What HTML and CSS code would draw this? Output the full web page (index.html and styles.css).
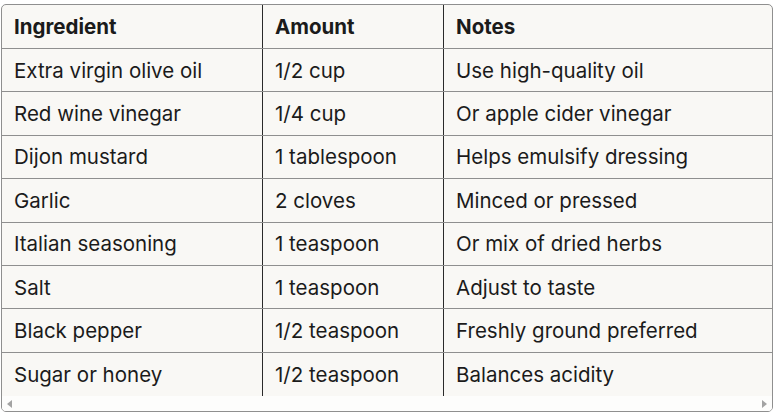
FILE: index.html
```html
<!DOCTYPE html>
<html lang="en">
<head>
<meta charset="utf-8">
<title>Vinaigrette ingredients</title>
<link rel="stylesheet" href="styles.css">
</head>
<body>
<div class="wrap">
  <div class="table" role="table">
    <div class="row head" role="row">
      <div class="cell c1" role="columnheader">Ingredient</div>
      <div class="cell c2" role="columnheader">Amount</div>
      <div class="cell c3" role="columnheader">Notes</div>
    </div>
    <div class="row" role="row">
      <div class="cell c1">Extra virgin olive oil</div>
      <div class="cell c2">1/2 cup</div>
      <div class="cell c3">Use high-quality oil</div>
    </div>
    <div class="row" role="row">
      <div class="cell c1">Red wine vinegar</div>
      <div class="cell c2">1/4 cup</div>
      <div class="cell c3">Or apple cider vinegar</div>
    </div>
    <div class="row" role="row">
      <div class="cell c1">Dijon mustard</div>
      <div class="cell c2">1 tablespoon</div>
      <div class="cell c3">Helps emulsify dressing</div>
    </div>
    <div class="row" role="row">
      <div class="cell c1">Garlic</div>
      <div class="cell c2">2 cloves</div>
      <div class="cell c3">Minced or pressed</div>
    </div>
    <div class="row" role="row">
      <div class="cell c1">Italian seasoning</div>
      <div class="cell c2">1 teaspoon</div>
      <div class="cell c3">Or mix of dried herbs</div>
    </div>
    <div class="row" role="row">
      <div class="cell c1">Salt</div>
      <div class="cell c2">1 teaspoon</div>
      <div class="cell c3">Adjust to taste</div>
    </div>
    <div class="row" role="row">
      <div class="cell c1">Black pepper</div>
      <div class="cell c2">1/2 teaspoon</div>
      <div class="cell c3">Freshly ground preferred</div>
    </div>
    <div class="row last" role="row">
      <div class="cell c1">Sugar or honey</div>
      <div class="cell c2">1/2 teaspoon</div>
      <div class="cell c3">Balances acidity</div>
    </div>
  </div>
  <div class="scrollbar">
    <span class="arrow left"></span>
    <span class="arrow right"></span>
  </div>
</div>
</body>
</html>
```
FILE: styles.css
```css
html, body {
  margin: 0;
  padding: 0;
  background: #ffffff;
}
body {
  padding: 4px 3px 0 1px;
  font-family: "Inter", "Noto Sans", sans-serif;
  color: #1b1b1b;
}
.wrap {
  width: 772px;
  height: 408px;
  box-sizing: border-box;
  border: 1px solid #8f8f8f;
  border-radius: 5px;
  overflow: hidden;
  background: #f9f8f5;
  display: flex;
  flex-direction: column;
}
.table {
  display: flex;
  flex-direction: column;
}
.row {
  display: grid;
  grid-template-columns: 261px 181px 1fr;
  height: 43.4px;
  box-sizing: border-box;
  border-bottom: 1px solid #8f8f8f;
}
.row.head {
  height: 44px;
}
.row.last {
  border-bottom: none;
  height: 43.4px;
}
.cell {
  display: flex;
  align-items: center;
  padding-left: 12px;
  font-size: 20.5px;
  white-space: nowrap;
}
.c1, .c2 {
  border-right: 1px solid #2a2a2a;
}
.c2, .c3 {
  padding-left: 12px;
}
.head .cell {
  font-weight: 700;
}
.scrollbar {
  flex: 1;
  background: #fdfdfc;
  display: flex;
  align-items: center;
  justify-content: space-between;
  padding: 0 5px;
}
.arrow {
  width: 0;
  height: 0;
  border-top: 4px solid transparent;
  border-bottom: 4px solid transparent;
}
.arrow.left {
  border-right: 5px solid #a3a3a3;
}
.arrow.right {
  border-left: 5px solid #a3a3a3;
}
```
